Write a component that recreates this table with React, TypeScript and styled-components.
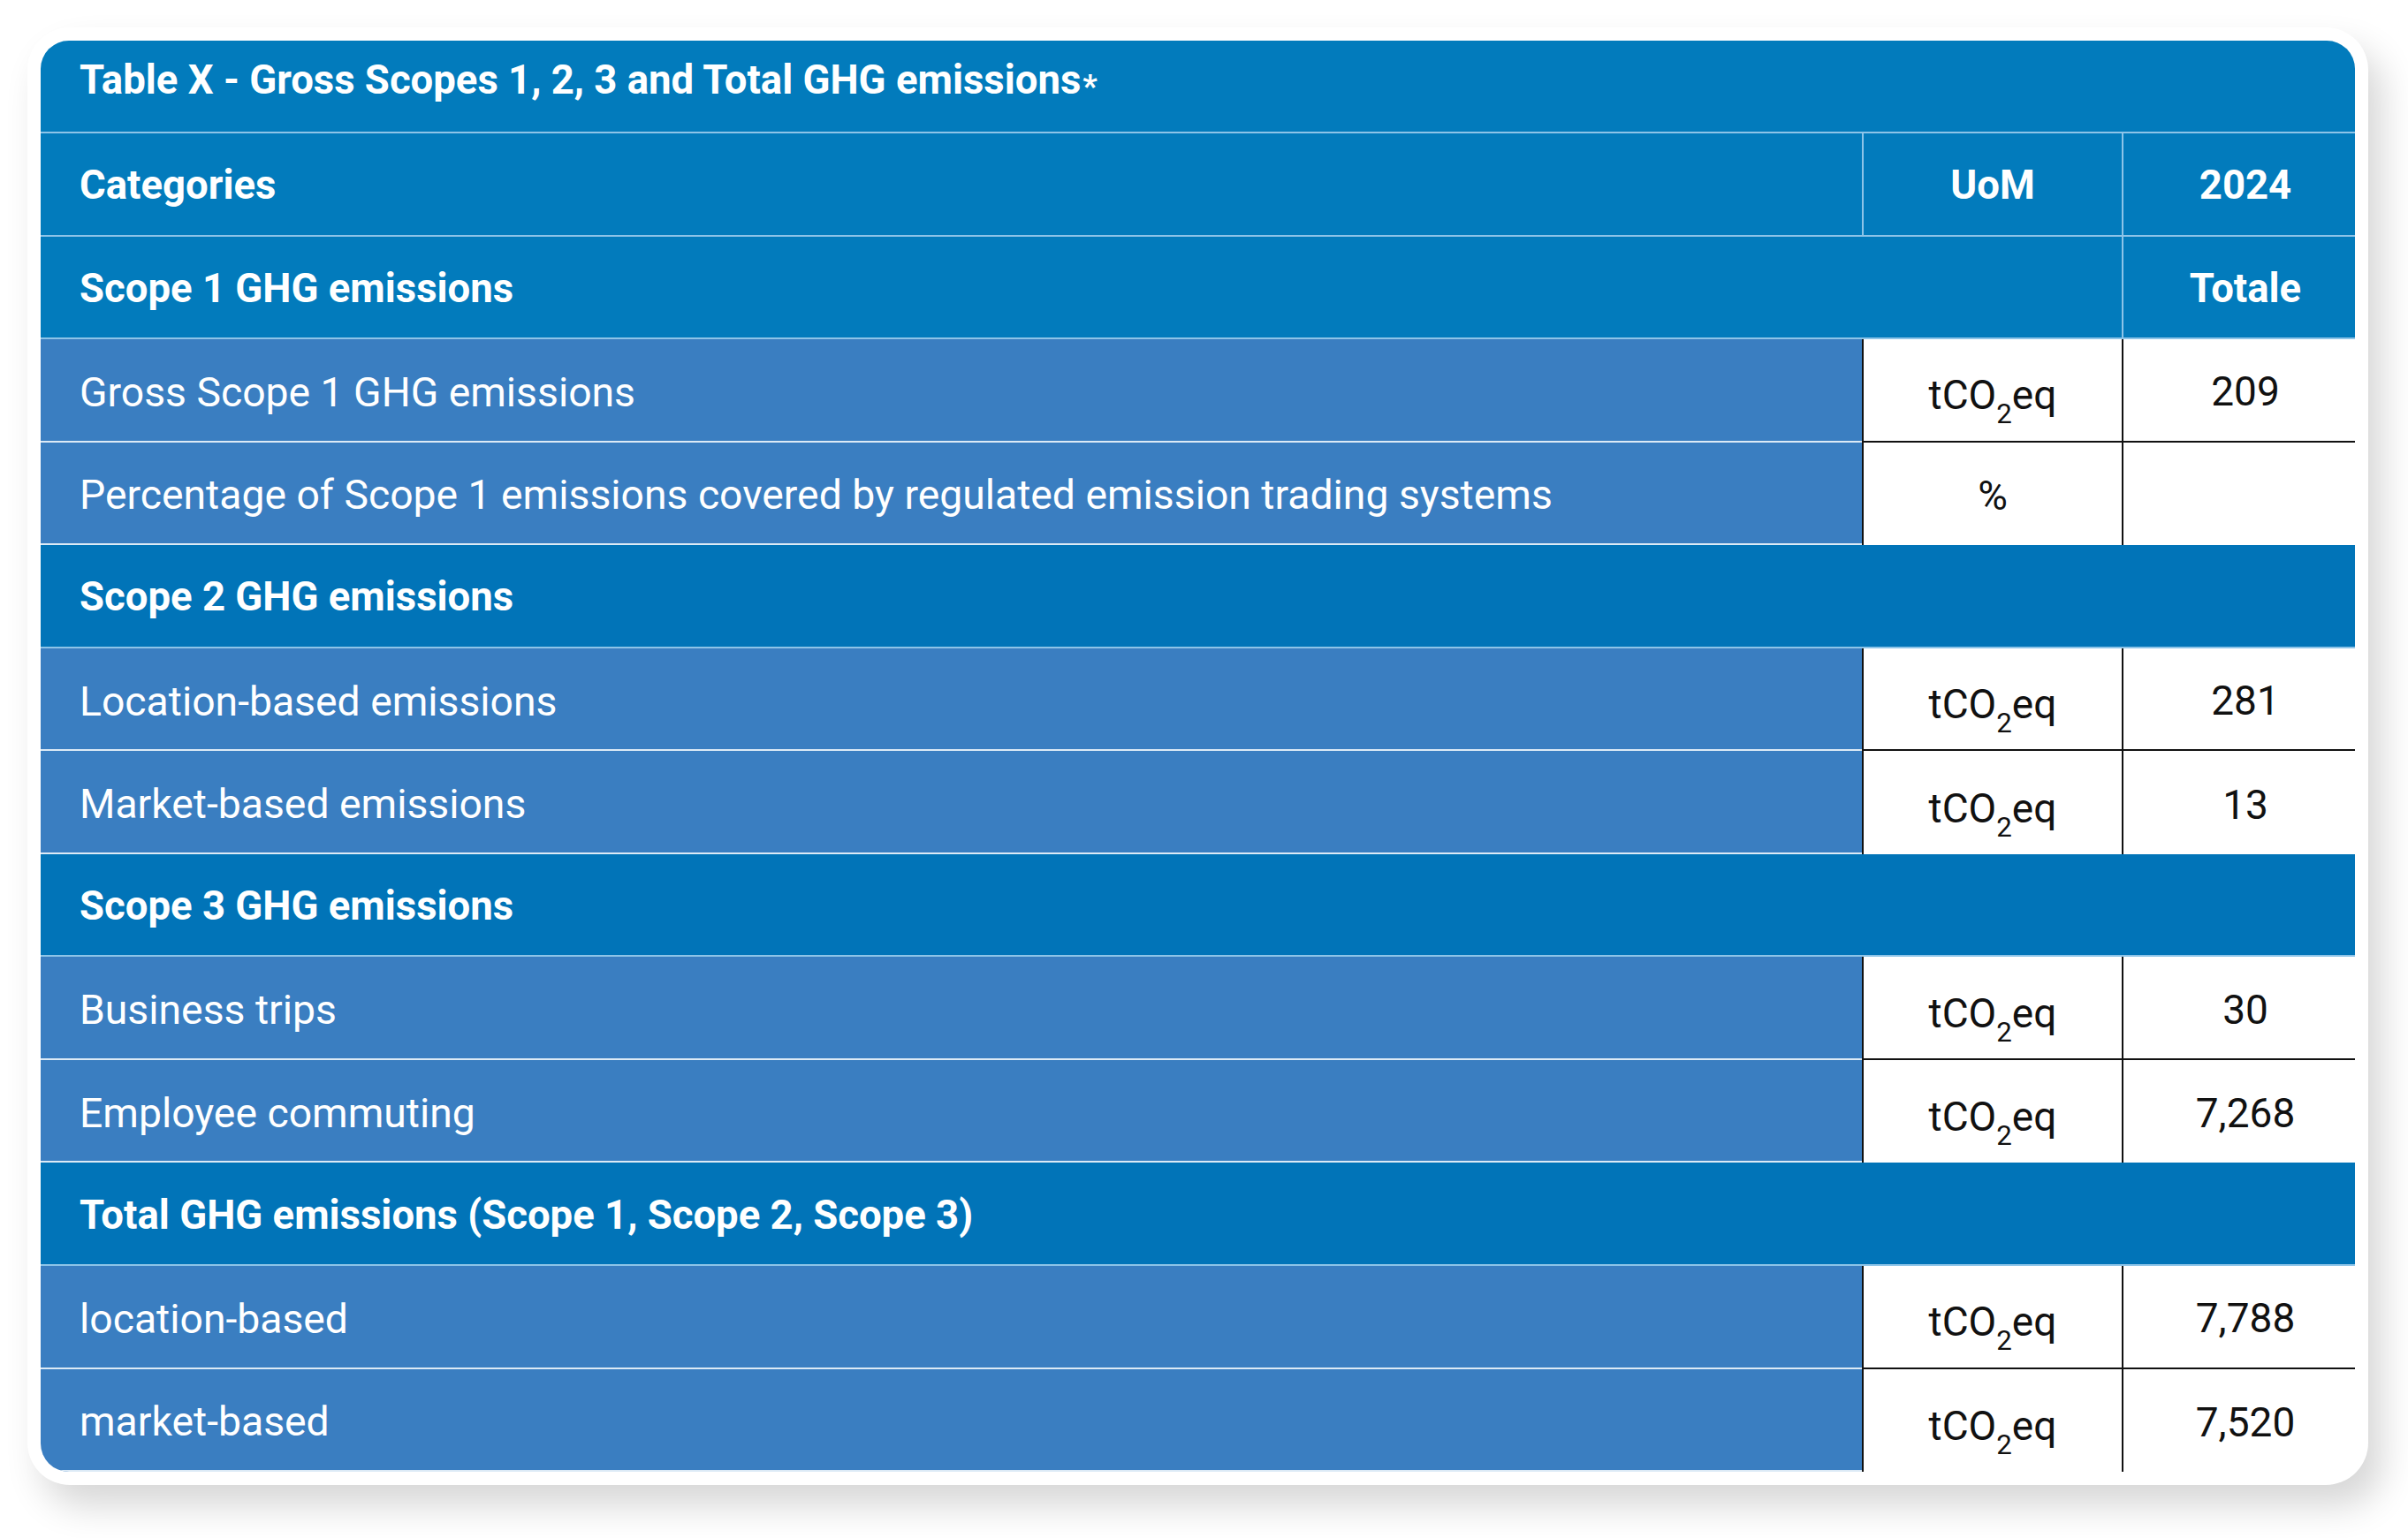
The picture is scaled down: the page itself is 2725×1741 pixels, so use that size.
import React from "react";
import { styled, createGlobalStyle } from "styled-components";

const GlobalStyle = createGlobalStyle`
  html, body {
    margin: 0;
    padding: 0;
    background: #ffffff;
  }
  body {
    font-family: Roboto, "Liberation Sans", Arial, sans-serif;
  }
`;

interface DataRow {
  label: string;
  unit: "co2" | "%";
  value: string;
}

interface Group {
  title: string;
  rows: DataRow[];
}

const groups: Group[] = [
  {
    title: "Scope 1 GHG emissions",
    rows: [
      { label: "Gross Scope 1 GHG emissions", unit: "co2", value: "209" },
      {
        label: "Percentage of Scope 1 emissions covered by regulated emission trading systems",
        unit: "%",
        value: "",
      },
    ],
  },
  {
    title: "Scope 2 GHG emissions",
    rows: [
      { label: "Location-based emissions", unit: "co2", value: "281" },
      { label: "Market-based emissions", unit: "co2", value: "13" },
    ],
  },
  {
    title: "Scope 3 GHG emissions",
    rows: [
      { label: "Business trips", unit: "co2", value: "30" },
      { label: "Employee commuting", unit: "co2", value: "7,268" },
    ],
  },
  {
    title: "Total GHG emissions (Scope 1, Scope 2, Scope 3)",
    rows: [
      { label: "location-based", unit: "co2", value: "7,788" },
      { label: "market-based", unit: "co2", value: "7,520" },
    ],
  },
];

const Page = styled.div`
  width: 2725px;
  height: 1741px;
  padding: 31px 0 0 31px;
  box-sizing: border-box;
`;

const Card = styled.div`
  width: 2649px;
  padding: 15px;
  box-sizing: border-box;
  background: #ffffff;
  border-radius: 48px;
  box-shadow: 16px 24px 40px rgba(0, 0, 0, 0.16);
`;

const Grid = styled.div`
  display: grid;
  grid-template-columns: 2061px 294px 264px;
  grid-template-rows: 105px;
  grid-auto-rows: 116.55px;
  border-radius: 32px;
  overflow: hidden;
  font-size: 46px;
  color: #ffffff;
`;

const HEAD_BLUE = "#027bbc";
const SECTION_BLUE = "#0174b8";
const LABEL_BLUE = "#3a7ec1";
const HEAD_LINE = "#8dc4e8";

const TitleCell = styled.div`
  grid-column: 1 / -1;
  display: flex;
  align-items: center;
  padding: 0 0 14px 44px;
  box-sizing: border-box;
  background: ${HEAD_BLUE};
  border-bottom: 2px solid ${HEAD_LINE};
  font-size: 45.5px;
  font-weight: 700;
`;

const Star = styled.span`
  font-size: 0.8em;
  margin-left: 2px;
  position: relative;
  top: 7px;
`;

const HeadCell = styled.div<{ $span?: number; $center?: boolean; $divider?: boolean }>`
  grid-column: span ${(p) => p.$span ?? 1};
  display: flex;
  align-items: center;
  justify-content: ${(p) => (p.$center ? "center" : "flex-start")};
  padding: ${(p) => (p.$center ? "3px 0 0 0" : "3px 0 0 44px")};
  box-sizing: border-box;
  background: ${HEAD_BLUE};
  border-bottom: 2px solid ${HEAD_LINE};
  border-left: ${(p) => (p.$divider ? `2px solid ${HEAD_LINE}` : "none")};
  font-size: 45.5px;
  font-weight: 700;
`;

const YearCell = styled(HeadCell)`
  padding-left: 14px;
`;

const SectionCell = styled.div`
  grid-column: 1 / -1;
  display: flex;
  align-items: center;
  padding: 3px 0 0 44px;
  box-sizing: border-box;
  background: ${SECTION_BLUE};
  border-bottom: 2px solid ${HEAD_LINE};
  font-size: 45.5px;
  font-weight: 700;
`;

const LabelCell = styled.div`
  display: flex;
  align-items: center;
  padding: 5px 0 0 44px;
  box-sizing: border-box;
  background: ${LABEL_BLUE};
  border-bottom: 2px solid #dceaf6;
  font-size: 46.3px;
  font-weight: 400;
  white-space: nowrap;
`;

const ValueCell = styled.div<{ $last?: boolean; $shift?: boolean }>`
  display: flex;
  align-items: center;
  justify-content: center;
  padding: 4px 0 0 ${(p) => (p.$shift ? "14px" : "0")};
  box-sizing: border-box;
  background: #ffffff;
  color: #111111;
  border-left: 2px solid #111111;
  border-bottom: ${(p) => (p.$last ? "none" : "2px solid #111111")};
`;

const UnitText = styled.span`
  position: relative;
  top: 4px;
`;

const Sub = styled.sub`
  font-size: 0.68em;
  vertical-align: -0.5em;
  line-height: 0;
`;

const Unit: React.FC<{ unit: DataRow["unit"] }> = ({ unit }) =>
  unit === "%" ? (
    <span>%</span>
  ) : (
    <UnitText>
      tCO<Sub>2</Sub>eq
    </UnitText>
  );

const App: React.FC = () => {
  return (
    <>
      <GlobalStyle />
      <Page>
        <Card>
          <Grid>
            <TitleCell>
              Table X - Gross Scopes 1, 2, 3 and Total GHG emissions<Star>*</Star>
            </TitleCell>

            <HeadCell>Categories</HeadCell>
            <HeadCell $center $divider>UoM</HeadCell>
            <YearCell $center $divider>2024</YearCell>

            {groups.map((group, gi) => (
              <React.Fragment key={gi}>
                {gi === 0 ? (
                  <>
                    <HeadCell $span={2}>{group.title}</HeadCell>
                    <YearCell $center $divider>Totale</YearCell>
                  </>
                ) : (
                  <SectionCell>{group.title}</SectionCell>
                )}
                {group.rows.map((row, ri) => {
                  const last = ri === group.rows.length - 1;
                  return (
                    <React.Fragment key={ri}>
                      <LabelCell>{row.label}</LabelCell>
                      <ValueCell $last={last}>
                        <Unit unit={row.unit} />
                      </ValueCell>
                      <ValueCell $last={last} $shift>
                        {row.value}
                      </ValueCell>
                    </React.Fragment>
                  );
                })}
              </React.Fragment>
            ))}
          </Grid>
        </Card>
      </Page>
    </>
  );
};

export default App;
